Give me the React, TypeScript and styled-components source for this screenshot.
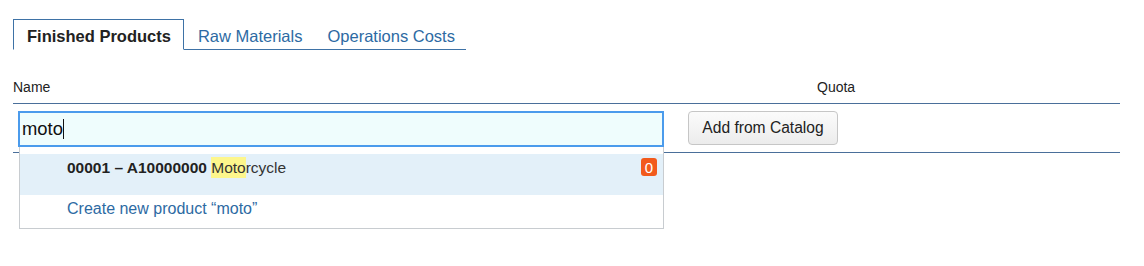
import React from 'react';
import styled, { createGlobalStyle } from 'styled-components';

const GlobalStyle = createGlobalStyle`
  html, body, #root {
    height: 100%;
  }
  body {
    margin: 0;
    background: #ffffff;
    font-family: "Liberation Sans", Arial, Helvetica, sans-serif;
    color: #222;
  }
`;

const tabs = ['Finished Products', 'Raw Materials', 'Operations Costs'];

const App: React.FC = () => {
  return (
    <Page>
      <GlobalStyle />
      <TabList>
        {tabs.map((t, i) => (
          <Tab key={t} $active={i === 0}>
            {t}
          </Tab>
        ))}
      </TabList>
      <Table>
        <HeaderRow>
          <NameHeader>Name</NameHeader>
          <QuotaHeader>Quota</QuotaHeader>
        </HeaderRow>
        <BodyRow>
          <InputWrap>
            <SearchInput>
              moto<Caret />
            </SearchInput>
            <Dropdown>
              <Option $highlighted>
                <OptionText>
                  <Code>00001 – A10000000 </Code>
                  <Match>Moto</Match>rcycle
                </OptionText>
                <Badge>0</Badge>
              </Option>
              <Option>
                <CreateLink>Create new product “moto”</CreateLink>
              </Option>
            </Dropdown>
          </InputWrap>
          <CatalogButton>Add from Catalog</CatalogButton>
        </BodyRow>
      </Table>
    </Page>
  );
};

export default App;

const Page = styled.div`
  box-sizing: border-box;
  min-height: 266px;
  padding: 19px 24px 0 13px;
`;

const TabList = styled.div`
  display: flex;
  width: fit-content;
  height: 30px;
  border-bottom: 1px solid #3e72a6;
`;

const Tab = styled.div<{ $active?: boolean }>`
  display: flex;
  align-items: center;
  white-space: nowrap;
  padding: ${(p) => (p.$active ? '4px 12px 0 13px' : '4px 11px 0 14px')};
  font-size: 16.5px;
  font-weight: ${(p) => (p.$active ? 700 : 400)};
  color: ${(p) => (p.$active ? '#222' : '#2d6aa3')};
  background: ${(p) => (p.$active ? '#fff' : 'transparent')};
  border: ${(p) => (p.$active ? '1px solid #3e72a6' : 'none')};
  border-bottom: ${(p) => (p.$active ? '1px solid #fff' : 'none')};
  margin-bottom: ${(p) => (p.$active ? '-1px' : '0')};
`;

const Table = styled.div`
  margin-top: 21px;
  width: 1107px;
`;

const HeaderRow = styled.div`
  display: flex;
  align-items: center;
  height: 32px;
  font-size: 14px;
  color: #222;
  border-bottom: 1px solid #4a6f9a;
`;

const NameHeader = styled.div`
  width: 804px;
`;

const QuotaHeader = styled.div``;

const BodyRow = styled.div`
  display: flex;
  align-items: flex-start;
  gap: 24px;
  padding: 7px 0 5px 5px;
  height: 36px;
  border-bottom: 1px solid #4a6f9a;
`;

const InputWrap = styled.div`
  position: relative;
  width: 646px;
`;

const SearchInput = styled.div`
  box-sizing: border-box;
  height: 36px;
  padding: 0 2px;
  display: flex;
  align-items: center;
  font-size: 18.4px;
  color: #111;
  background: #effdfd;
  border: 2px solid #4b9bec;
`;

const Caret = styled.span`
  display: inline-block;
  width: 1px;
  height: 20px;
  background: #111;
`;

const Dropdown = styled.div`
  position: absolute;
  left: 1px;
  top: 36px;
  width: 645px;
  box-sizing: border-box;
  background: #fff;
  border: 1px solid #c8ccd0;
  border-top: none;
  padding: 7px 0 5px;
  z-index: 2;
`;

const Option = styled.div<{ $highlighted?: boolean }>`
  display: flex;
  align-items: flex-start;
  justify-content: space-between;
  height: ${(p) => (p.$highlighted ? '41px' : '28px')};
  padding: ${(p) => (p.$highlighted ? '4px' : '3px')} 6px 0 47px;
  box-sizing: border-box;
  background: ${(p) => (p.$highlighted ? '#e3f0f9' : '#fff')};
  font-size: 15.5px;
`;

const OptionText = styled.div`
  color: #333;
  padding-top: 1px;
`;

const Code = styled.span`
  font-weight: 700;
  color: #222;
`;

const Match = styled.span`
  background: #fdf68c;
  padding: 2px 0;
`;

const Badge = styled.span`
  display: inline-flex;
  align-items: center;
  justify-content: center;
  width: 16px;
  height: 18px;
  border-radius: 3px;
  background: #f25a1c;
  color: #fff;
  font-size: 15px;
`;

const CreateLink = styled.span`
  color: #2d6aa3;
  font-size: 16px;
  padding-top: 2px;
`;

const CatalogButton = styled.button`
  height: 34px;
  width: 150px;
  font-family: "Liberation Sans", Arial, Helvetica, sans-serif;
  font-size: 15.6px;
  color: #222;
  background: linear-gradient(#fbfbfb, #ececec);
  border: 1px solid #c6c6c6;
  border-radius: 4px;
  padding: 0;
`;
